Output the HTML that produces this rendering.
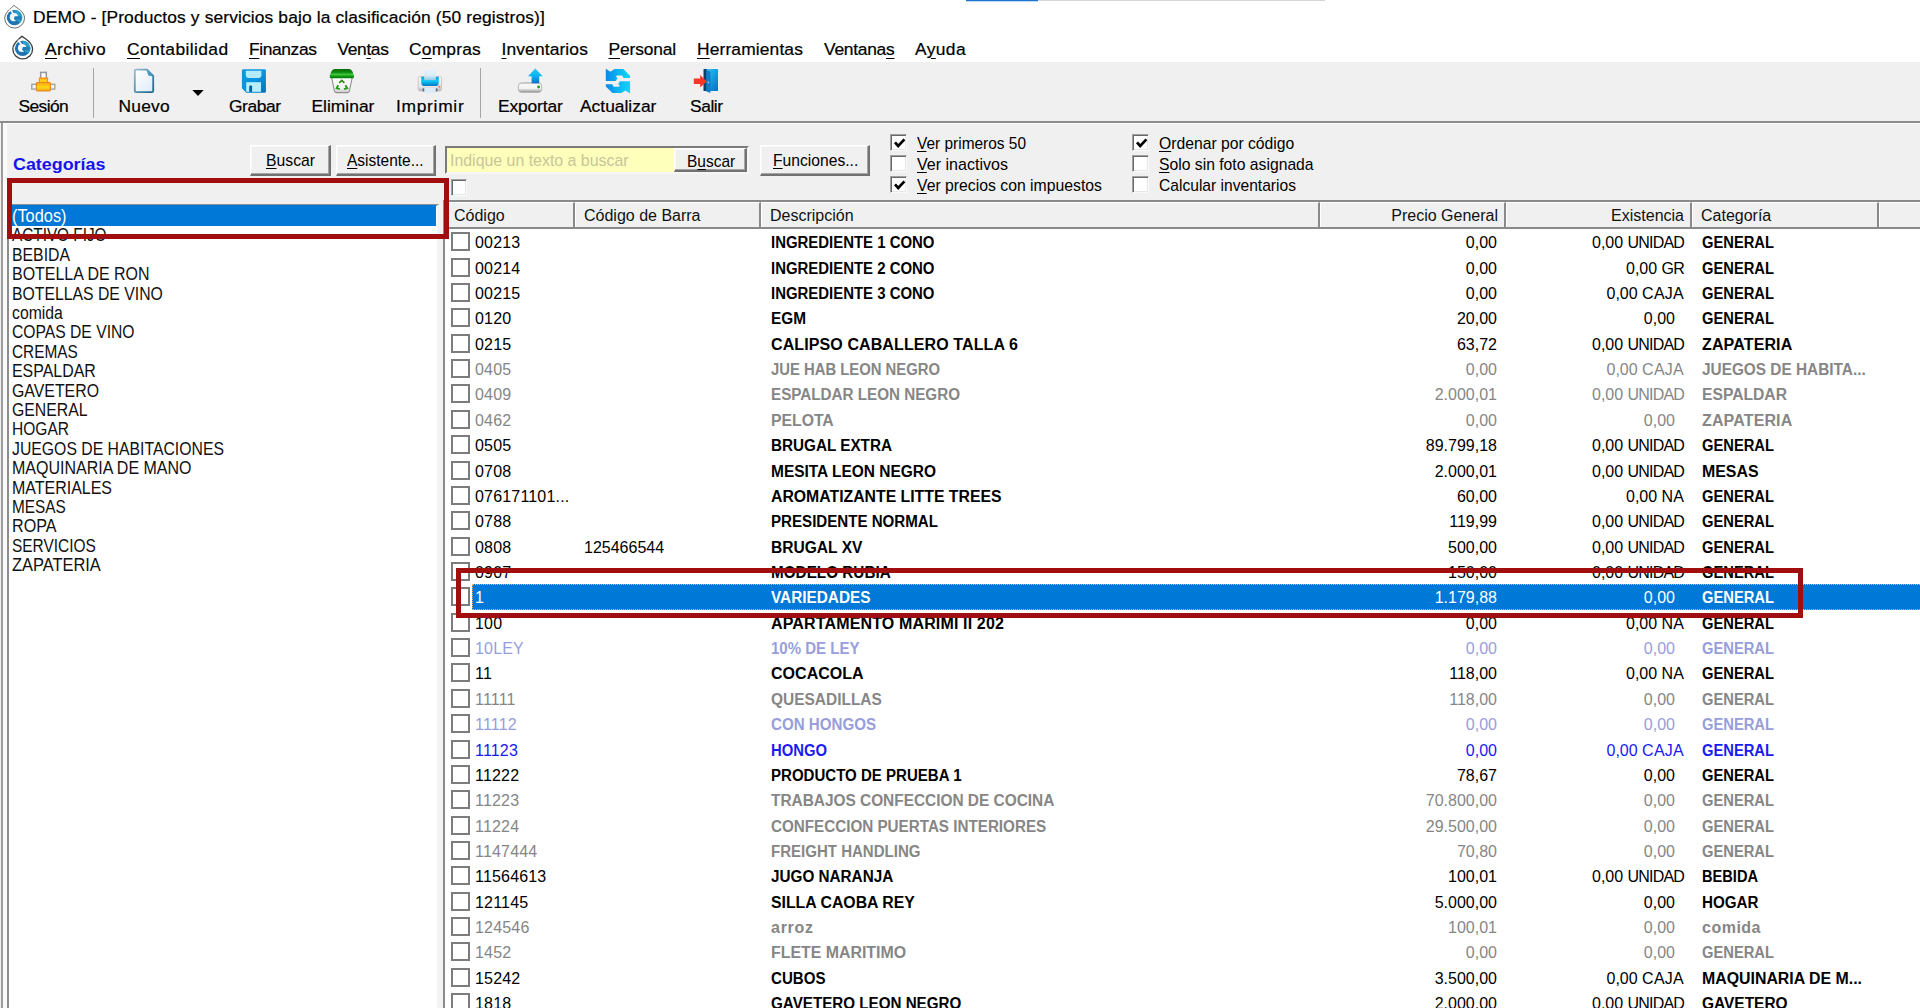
<!DOCTYPE html>
<html lang="es">
<head>
<meta charset="utf-8">
<title>DEMO - Productos y servicios</title>
<style>
html,body{margin:0;padding:0;}
body{width:1920px;height:1008px;overflow:hidden;background:#fff;position:relative;font-family:"Liberation Sans",sans-serif;color:#000;}
div,span,b,i,u{box-sizing:border-box;}
.abs{position:absolute;}
u{text-decoration:underline;text-underline-offset:2px;text-decoration-thickness:1px;}
.ttl{position:absolute;left:33px;top:5.4px;-webkit-text-stroke:0.22px #000;font-size:17.4px;line-height:24px;white-space:nowrap;color:#000;}
.mi{position:absolute;top:36.8px;-webkit-text-stroke:0.22px #000;font-size:17.4px;line-height:24px;white-space:nowrap;color:#000;}
.mi u{text-underline-offset:3px;}
#tb{position:absolute;left:0;top:62px;width:1920px;height:60px;background:#f0f0f0;}
.tl{position:absolute;top:93.7px;-webkit-text-stroke:0.22px #000;font-size:17.4px;line-height:24px;white-space:nowrap;color:#000;}
.sep{position:absolute;top:68px;width:1px;height:50px;background:#a6a6a6;}
#panel{position:absolute;left:0;top:122px;width:1920px;height:886px;background:#f0f0f0;}
.btn{position:absolute;height:31px;background:#f0f0f0;border:solid;border-width:1px 2px 2px 1px;border-color:#fff #727272 #727272 #fff;box-shadow:inset -1px -1px 0 #a6a6a6, inset 1px 1px 0 #f8f8f8;}
.bt{position:absolute;font-size:17px;line-height:22px;white-space:nowrap;transform-origin:0 50%;}
.lbl{position:absolute;font-size:17px;line-height:20px;white-space:nowrap;transform-origin:0 50%;}
.chk{position:absolute;width:17px;height:17px;background:#fff;border:1px solid;border-color:#a0a0a0 #fafafa #fafafa #a0a0a0;box-shadow:inset 1px 1px 0 #696969, inset -1px -1px 0 #e6e6e6;}
.chk svg{position:absolute;left:3px;top:3px;overflow:visible;}
#list{position:absolute;left:7px;top:204px;width:432px;height:810px;background:#fff;border:2px solid #8e8e8e;border-right-color:#e4e4e4;}
.cibg{position:absolute;left:9px;width:427px;height:20.5px;background:#0078d7;}
.ci{position:absolute;left:12.4px;height:20px;font-size:17.6px;line-height:22.6px;white-space:nowrap;color:#111;transform-origin:0 50%;}
.ci.sel{color:#fff;}
#tbl{position:absolute;left:443px;top:200px;width:1480px;height:810px;background:#fff;border-left:2px solid #8a8a8a;}
#th{position:absolute;left:445px;top:200px;width:1475px;height:29px;background:#f0f0f0;border-top:2px solid #8a8a8a;border-bottom:2px solid #8a8a8a;}
.hc{position:absolute;top:202px;height:25px;border-left:1px solid #fff;border-top:1px solid #fff;border-right:2px solid #8a8a8a;font-size:16px;line-height:26px;white-space:nowrap;padding:0 8px 0 8px;color:#111;}
.hc.r{text-align:right;padding-right:6px;}
.r{position:absolute;left:445px;width:1475px;height:25.4px;font-size:16px;line-height:25.4px;white-space:nowrap;}
.r span,.r b{position:absolute;top:0;}
.r .un{position:static;}
.r b{font-weight:bold;}
.cb{position:absolute;left:6px;top:2px;width:19px;height:19px;border:2px solid #7c7c7c;background:#fff;}
.c1{left:30px;letter-spacing:0.18px;}
.c2{left:139px;}
.c3{left:326px;transform-origin:0 50%;}
.c4{right:423px;}
.c5{right:236px;}
.c5.nu{right:245px;}
.c6{left:1257px;transform-origin:0 50%;}
.selbg{position:absolute;left:27px;top:-1px;width:1450px;height:25.6px;background:#0078d7;outline:1px dotted #e8b070;outline-offset:-1px;}
.red{position:absolute;border:5px solid #a00e0e;}
</style>
</head>
<body>
<!-- top accent strip -->
<div class="abs" style="left:966px;top:0;width:72px;height:1px;background:#1a72d2"></div>
<div class="abs" style="left:966px;top:1px;width:72px;height:1px;background:#c4dcf4"></div>
<div class="abs" style="left:1038px;top:0;width:287px;height:1px;background:#d6d6d6"></div>

<!-- title bar -->
<svg class="abs" style="left:2px;top:3px" width="26" height="28" viewBox="2 3 26 28">
 <g transform="translate(14.5 17.6)">
 <path d="M-0.6 -12.2 C2.4 -9.4 10 -6.4 10 0.6 A9.9 9.9 0 0 1 -9.8 0.6 C-9.8 -5.4 -3.2 -9.4 -0.6 -12.2 Z" fill="#fdfdfd" stroke="#5c5c5c" stroke-width="0.9" stroke-linejoin="round"/>
 <circle cx="0" cy="0" r="7.7" fill="#1d74b0"/>
 <path d="M0 -7.7 A7.7 7.7 0 0 1 5.6 5.3 L2.6 2.8 A4 4 0 0 0 0 -4 Z" fill="#2b9fca"/>
 <circle cx="-0.6" cy="-0.4" r="4.1" fill="#f4f9fc"/>
 <path d="M0.2 -1.4 H6.8 V1.8 H2.4 V4.2 L-0.6 1.4 Z" fill="#1f7cb6"/>
 <path d="M-4.4 -8.6 L-1 -3.4" stroke="#f4f9fc" stroke-width="1.7"/>
 </g>
</svg>
<div class="ttl" style="letter-spacing:0.126px">DEMO - [Productos y servicios bajo la clasificación (50 registros)]</div>

<!-- menu bar -->
<svg class="abs" style="left:10px;top:34px" width="26" height="28" viewBox="10 34 26 28">
 <g transform="translate(22.6 48.4)">
 <path d="M-0.6 -12.2 C2.4 -9.4 10 -6.4 10 0.6 A9.9 9.9 0 0 1 -9.8 0.6 C-9.8 -5.4 -3.2 -9.4 -0.6 -12.2 Z" fill="#fdfdfd" stroke="#3e3e3e" stroke-width="1.3" stroke-linejoin="round"/>
 <circle cx="0" cy="0" r="7.7" fill="#1d74b0"/>
 <path d="M0 -7.7 A7.7 7.7 0 0 1 5.6 5.3 L2.6 2.8 A4 4 0 0 0 0 -4 Z" fill="#2b9fca"/>
 <circle cx="-0.6" cy="-0.4" r="4.1" fill="#f4f9fc"/>
 <path d="M0.2 -1.4 H6.8 V1.8 H2.4 V4.2 L-0.6 1.4 Z" fill="#1f7cb6"/>
 <path d="M-4.4 -8.6 L-1 -3.4" stroke="#f4f9fc" stroke-width="1.7"/>
 </g>
</svg>
<div class="mi" style="left:45px;letter-spacing:0.429px"><u>A</u>rchivo</div>
<div class="mi" style="left:127px;letter-spacing:0.400px"><u>C</u>ontabilidad</div>
<div class="mi" style="left:249px;letter-spacing:-0.385px"><u>F</u>inanzas</div>
<div class="mi" style="left:337.5px;letter-spacing:-0.367px">Ven<u>t</u>as</div>
<div class="mi" style="left:409px;letter-spacing:0.205px">C<u>o</u>mpras</div>
<div class="mi" style="left:501.5px;letter-spacing:0.128px"><u>I</u>nventarios</div>
<div class="mi" style="left:608.5px;letter-spacing:-0.145px"><u>P</u>ersonal</div>
<div class="mi" style="left:697px;letter-spacing:0.134px"><u>H</u>erramientas</div>
<div class="mi" style="left:824px;letter-spacing:-0.256px">Ventana<u>s</u></div>
<div class="mi" style="left:915px;letter-spacing:0.397px">A<u>y</u>uda</div>

<!-- toolbar -->
<div id="tb"></div>
<div class="sep" style="left:93px"></div>
<div class="sep" style="left:480px"></div>
<!--ICONS_START-->
<svg class="abs" style="left:0;top:62px" width="760" height="60" viewBox="0 62 760 60">
<defs>
 <linearGradient id="gOr" x1="0" y1="0" x2="0" y2="1"><stop offset="0" stop-color="#ffa31a"/><stop offset="0.55" stop-color="#ffd614"/><stop offset="1" stop-color="#ffab1c"/></linearGradient>
 <linearGradient id="gPg" x1="0" y1="0" x2="1" y2="1"><stop offset="0" stop-color="#ffffff"/><stop offset="0.5" stop-color="#eef5fb"/><stop offset="1" stop-color="#dcecf8"/></linearGradient>
 <linearGradient id="gPgS" x1="0" y1="0" x2="1" y2="1"><stop offset="0" stop-color="#9dbdd0"/><stop offset="0.5" stop-color="#4d8fb0"/><stop offset="1" stop-color="#1d6685"/></linearGradient>
 <linearGradient id="gFl" x1="0" y1="0" x2="1" y2="1"><stop offset="0" stop-color="#1098dc"/><stop offset="0.5" stop-color="#0a94e0"/><stop offset="1" stop-color="#0670b8"/></linearGradient>
 <linearGradient id="gLid" x1="0" y1="0" x2="0" y2="1"><stop offset="0" stop-color="#066a06"/><stop offset="0.35" stop-color="#0c8a0c"/><stop offset="0.6" stop-color="#3ec63e"/><stop offset="0.8" stop-color="#0e960e"/><stop offset="1" stop-color="#087808"/></linearGradient>
 <linearGradient id="gBin" x1="0" y1="0" x2="0" y2="1"><stop offset="0" stop-color="#ffffff"/><stop offset="0.7" stop-color="#f4f4f4"/><stop offset="1" stop-color="#c8c8c8"/></linearGradient>
 <linearGradient id="gPr" x1="0" y1="0" x2="0" y2="1"><stop offset="0" stop-color="#0aa0dc"/><stop offset="0.45" stop-color="#0ccaf8"/><stop offset="1" stop-color="#0474c0"/></linearGradient>
 <linearGradient id="gPap" x1="0" y1="0" x2="0" y2="1"><stop offset="0" stop-color="#eef0fa"/><stop offset="0.6" stop-color="#d8ecf6"/><stop offset="1" stop-color="#8cc8e4"/></linearGradient>
 <linearGradient id="gBody" x1="0" y1="0" x2="0" y2="1"><stop offset="0" stop-color="#f2f8fc"/><stop offset="0.7" stop-color="#e4e8ec"/><stop offset="1" stop-color="#b4b4bc"/></linearGradient>
 <linearGradient id="gAr" x1="0" y1="0" x2="0" y2="1"><stop offset="0" stop-color="#22ccf8"/><stop offset="0.5" stop-color="#0cb4f0"/><stop offset="1" stop-color="#0870cc"/></linearGradient>
 <linearGradient id="gDrv" x1="0" y1="0" x2="0" y2="1"><stop offset="0" stop-color="#c4c4c4"/><stop offset="0.2" stop-color="#fbfbfb"/><stop offset="0.6" stop-color="#f0f0f0"/><stop offset="1" stop-color="#8e8e92"/></linearGradient>
 <linearGradient id="gRf" x1="0" y1="0" x2="1" y2="0"><stop offset="0" stop-color="#0a88e6"/><stop offset="0.55" stop-color="#0cb8f4"/><stop offset="1" stop-color="#14d4f8"/></linearGradient>
 <linearGradient id="gDoor" x1="0" y1="0" x2="1" y2="1"><stop offset="0" stop-color="#48c8f4"/><stop offset="0.5" stop-color="#10a0e4"/><stop offset="1" stop-color="#0870c4"/></linearGradient>
</defs>
<!-- Sesion -->
<rect x="40.7" y="72.4" width="5.6" height="6.4" fill="#fff" stroke="#9696a2" stroke-width="1.5"/>
<rect x="31.8" y="84.3" width="5" height="4.8" fill="#f4f4f4" stroke="#9aa09c" stroke-width="1.3"/>
<rect x="49.8" y="84.3" width="5" height="4.8" fill="#f4f4f4" stroke="#9aa09c" stroke-width="1.3"/>
<rect x="39.4" y="78" width="8.2" height="5" fill="url(#gOr)" stroke="#ee8f28" stroke-width="1.1"/>
<rect x="36.4" y="82.5" width="14" height="8.4" rx="0.8" fill="url(#gOr)" stroke="#e88a22" stroke-width="1.2"/>
<!-- Nuevo -->
<path d="M135.8 69.6 H147 L153.2 75.8 V90.8 a1.4 1.4 0 0 1 -1.4 1.4 H136.2 a1.4 1.4 0 0 1 -1.4 -1.4 V70.6 a1 1 0 0 1 1 -1 Z" fill="url(#gPg)" stroke="url(#gPgS)" stroke-width="1.8" stroke-linejoin="round"/>
<path d="M146.4 70 L152.8 76.4 L148.4 75.4 Z" fill="#3c96c0"/>
<!-- dropdown arrow -->
<path d="M192.3 90 H203.7 L198 96 Z" fill="#000"/>
<!-- Grabar -->
<path d="M243.3 69.2 H264.5 a1.4 1.4 0 0 1 1.4 1.4 V91.4 a1.4 1.4 0 0 1 -1.4 1.4 H246.2 L241.9 88.3 V70.6 a1.4 1.4 0 0 1 1.4 -1.4 Z" fill="url(#gFl)"/>
<path d="M245.8 70.8 H261.4 V75 a3 3 0 0 1 -3 3 H248.8 a3 3 0 0 1 -3 -3 Z" fill="#b2ecfc"/>
<rect x="246.2" y="82.2" width="14.8" height="9.6" fill="#b6effc"/>
<rect x="249.2" y="85.6" width="2.9" height="6.4" rx="1" fill="#0560a8"/>
<!-- Eliminar -->
<path d="M331.6 77 L334.4 91 a2 2 0 0 0 2 1.6 H347.4 a2 2 0 0 0 2 -1.6 L352.3 77 Z" fill="url(#gBin)" stroke="#8e8e92" stroke-width="1.1"/>
<path d="M335.2 69 H348.6 Q351.2 69 352.4 71.4 L353.9 75.2 V77.2 a1 1 0 0 1 -1 1 H330.8 a1 1 0 0 1 -1 -1 V75.2 L331.4 71.4 Q332.6 69 335.2 69 Z" fill="url(#gLid)"/>
<path d="M339.2 82.8 L341.8 80.4 L344.4 82.8" fill="none" stroke="#2e8a14" stroke-width="1.7"/>
<path d="M338.2 85.2 L336.6 88.2 L339.8 89.2" fill="none" stroke="#2a9a1c" stroke-width="1.9"/>
<path d="M345.4 85.2 L347.2 88.2 L344 89.2" fill="none" stroke="#2a9a1c" stroke-width="1.9"/>
<!-- Imprimir -->
<rect x="418.2" y="76.4" width="23.4" height="14.6" rx="2" fill="url(#gBody)" stroke="#c4bcb8" stroke-width="0.8"/>
<path d="M421.2 76.8 H438.8 V82.4 a3.6 3.6 0 0 1 -3.6 3.6 H424.8 a3.6 3.6 0 0 1 -3.6 -3.6 Z" fill="url(#gPr)"/>
<rect x="424.2" y="68.8" width="11.6" height="11.4" fill="url(#gPap)"/>
<rect x="424.2" y="88" width="11.6" height="5" fill="#dcecf6"/>
<rect x="422.6" y="88.4" width="1.6" height="3" fill="#5a6a78"/>
<rect x="435.8" y="88.4" width="1.6" height="3" fill="#5a6a78"/>
<circle cx="439.4" cy="86.6" r="1.2" fill="#e88a50"/>
<!-- Exportar -->
<rect x="518.4" y="82.8" width="23.2" height="9.6" rx="3.2" fill="url(#gDrv)" stroke="#b2b2b2" stroke-width="0.9"/>
<circle cx="538.6" cy="87" r="1.4" fill="#1e9a1e"/>
<path d="M535.3 68.6 L542.6 76.2 H539.2 V83.2 H531.6 V76.2 H528 Z" fill="url(#gAr)"/>
<!-- Actualizar -->
<path d="M605.8 68.8 L610.4 71.8 L614.5 69.1 H623.4 L630 75.7 V78 H623.6 L622.1 75.4 H617 L615.8 76.7 L617.7 78 L615.8 80.9 H605.8 Z" fill="url(#gRf)"/>
<path d="M630.1 93.4 L625.4 90.4 L621.4 93.1 H612.4 L605.8 86.5 V84.2 H612.2 L613.7 86.8 H618.8 L620 85.5 L618.1 84.2 L620 81.3 H630.1 Z" fill="url(#gRf)"/>
<!-- Salir -->
<rect x="703.6" y="69" width="14.4" height="22" rx="0.8" fill="url(#gDoor)"/>
<path d="M703.6 69 H706.6 L706.4 91 H703.6 Z" fill="#063e6c"/>
<path d="M706.2 70.2 L710.4 71.4 V93 L706.4 91.4 Z" fill="#0f7cc4"/>
<path d="M693.8 78.4 H700.2 V75 L706.8 81.6 L700.2 87.6 V84 H693.8 Z" fill="#f03a26"/>
<circle cx="708.4" cy="82.4" r="0.8" fill="#9adcff"/>
</svg>
<!--ICONS_END-->
<div class="tl" style="left:18.4px;letter-spacing:-0.565px">Sesión</div>
<div class="tl" style="left:118.4px;letter-spacing:0.264px">Nuevo</div>
<div class="tl" style="left:229px;letter-spacing:-0.421px">Grabar</div>
<div class="tl" style="left:311.4px;letter-spacing:0.023px">Eliminar</div>
<div class="tl" style="left:396px;letter-spacing:0.700px">Imprimir</div>
<div class="tl" style="left:498px;letter-spacing:-0.142px">Exportar</div>
<div class="tl" style="left:580px;">Actualizar</div>
<div class="tl" style="left:690px;letter-spacing:-0.439px">Salir</div>

<!-- main panel -->
<div id="panel"></div>
<div class="abs" style="left:0;top:121px;width:1920px;height:2px;background:#8c8c8c"></div>
<div class="abs" style="left:1px;top:123px;width:2px;height:885px;background:#9c9c9c"></div>
<div class="abs" style="left:3px;top:123px;width:1917px;height:1px;background:#fbfbfb"></div>
<div class="abs" style="left:3px;top:124px;width:4px;height:884px;background:#fafafa"></div>

<div class="lbl" style="left:12.6px;top:155.4px;font-weight:bold;color:#1414ec;font-size:17px;transform:scaleX(1.0515)">Categorías</div>
<div class="btn" style="left:250px;top:145px;width:81px"></div>
<div class="bt" style="left:266.4px;top:150px;transform:scaleX(0.9259)"><u>B</u>uscar</div>
<div class="btn" style="left:336px;top:145px;width:100px"></div>
<div class="bt" style="left:346.6px;top:150px;transform:scaleX(0.9107)"><u>A</u>sistente...</div>

<!-- search box -->
<div class="abs" style="left:445px;top:146px;width:304px;height:28px;border:2px solid;border-color:#7a7a7a #f6f6f6 #f6f6f6 #7a7a7a;background:#ffffbc"></div>
<div class="bt" style="left:449.8px;top:150px;color:#c6c69a;transform:scaleX(0.9355)">Indique un texto a buscar</div>
<div class="btn" style="left:674px;top:148px;width:73px;height:24px"></div>
<div class="bt" style="left:686.6px;top:150.6px;transform:scaleX(0.9105)">B<u>u</u>scar</div>
<div class="btn" style="left:760px;top:145px;width:110px"></div>
<div class="bt" style="left:772.6px;top:150px;transform:scaleX(0.9209)"><u>F</u>unciones...</div>

<!-- select-all checkbox -->
<div class="chk" style="left:451px;top:178.5px;width:16px;height:17px"></div>

<!-- option checkboxes -->
<div class="chk" style="left:890px;top:134px"><svg width="11" height="11" viewBox="0 0 11 11"><path d="M1 4.4 L4.2 8 L10.4 1.4" fill="none" stroke="#000" stroke-width="2.7"/></svg></div>
<div class="chk" style="left:890px;top:155px"></div>
<div class="chk" style="left:890px;top:176px"><svg width="11" height="11" viewBox="0 0 11 11"><path d="M1 4.4 L4.2 8 L10.4 1.4" fill="none" stroke="#000" stroke-width="2.7"/></svg></div>
<div class="chk" style="left:1132px;top:134px"><svg width="11" height="11" viewBox="0 0 11 11"><path d="M1 4.4 L4.2 8 L10.4 1.4" fill="none" stroke="#000" stroke-width="2.7"/></svg></div>
<div class="chk" style="left:1132px;top:155px"></div>
<div class="chk" style="left:1132px;top:176px"></div>

<div class="lbl" style="left:916.8px;top:134.2px;transform:scaleX(0.9082)"><u>V</u>er primeros 50</div>
<div class="lbl" style="left:916.8px;top:155.2px;transform:scaleX(0.9441)"><u>V</u>er inactivos</div>
<div class="lbl" style="left:916.8px;top:176.2px;transform:scaleX(0.9278)"><u>V</u>er precios con impuestos</div>
<div class="lbl" style="left:1159.2px;top:134.2px;transform:scaleX(0.9235)"><u>O</u>rdenar por código</div>
<div class="lbl" style="left:1159.2px;top:155.2px;transform:scaleX(0.9241)"><u>S</u>olo sin foto asignada</div>
<div class="lbl" style="left:1159.2px;top:176.2px;transform:scaleX(0.9176)">Calcular inventarios</div>

<!-- category list -->
<div id="list"></div>
<div class="abs" style="left:437px;top:205px;width:6px;height:803px;background:#f3f3f3"></div>
<div class="cibg" style="top:205.0px"></div>
<div class="ci sel" style="top:205.0px;transform:scaleX(0.9289)">(Todos)</div>
<div class="ci" style="top:224.4px;transform:scaleX(0.8708)">ACTIVO FIJO</div>
<div class="ci" style="top:243.8px;transform:scaleX(0.8986)">BEBIDA</div>
<div class="ci" style="top:263.2px;transform:scaleX(0.9072)">BOTELLA DE RON</div>
<div class="ci" style="top:282.6px;transform:scaleX(0.8967)">BOTELLAS DE VINO</div>
<div class="ci" style="top:302.0px;transform:scaleX(0.8956)">comida</div>
<div class="ci" style="top:321.4px;transform:scaleX(0.8907)">COPAS DE VINO</div>
<div class="ci" style="top:340.8px;transform:scaleX(0.8741)">CREMAS</div>
<div class="ci" style="top:360.2px;transform:scaleX(0.9052)">ESPALDAR</div>
<div class="ci" style="top:379.6px;transform:scaleX(0.9018)">GAVETERO</div>
<div class="ci" style="top:399.0px;transform:scaleX(0.8978)">GENERAL</div>
<div class="ci" style="top:418.4px;transform:scaleX(0.8833)">HOGAR</div>
<div class="ci" style="top:437.8px;transform:scaleX(0.8973)">JUEGOS DE HABITACIONES</div>
<div class="ci" style="top:457.2px;transform:scaleX(0.9090)">MAQUINARIA DE MANO</div>
<div class="ci" style="top:476.6px;transform:scaleX(0.9078)">MATERIALES</div>
<div class="ci" style="top:496.0px;transform:scaleX(0.8732)">MESAS</div>
<div class="ci" style="top:515.4px;transform:scaleX(0.9163)">ROPA</div>
<div class="ci" style="top:534.8px;transform:scaleX(0.8775)">SERVICIOS</div>
<div class="ci" style="top:554.2px;transform:scaleX(0.9332)">ZAPATERIA</div>

<!-- table -->
<div id="tbl"></div>
<div id="th"></div>
<div class="hc" style="left:445px;width:130px">Código</div>
<div class="hc" style="left:575px;width:186px">Código de Barra</div>
<div class="hc" style="left:761px;width:559px">Descripción</div>
<div class="hc r" style="left:1320px;width:186px">Precio General</div>
<div class="hc r" style="left:1506px;width:186px">Existencia</div>
<div class="hc" style="left:1692px;width:187px">Categoría</div>
<div class="hc" style="left:1879px;width:60px"></div>
<div class="r" style="top:230.30px;color:#000"><i class="cb"></i><span class="c1">00213</span><b class="c3" style="transform:scaleX(0.9335)">INGREDIENTE 1 CONO</b><span class="c4">0,00</span><span class="c5">0,00 <span class="un" style="letter-spacing:-0.824px">UNIDAD</span></span><b class="c6" style="transform:scaleX(0.9203)">GENERAL</b></div>
<div class="r" style="top:255.66px;color:#000"><i class="cb"></i><span class="c1">00214</span><b class="c3" style="transform:scaleX(0.9335)">INGREDIENTE 2 CONO</b><span class="c4">0,00</span><span class="c5">0,00 <span class="un" style="letter-spacing:-0.800px">GR</span></span><b class="c6" style="transform:scaleX(0.9203)">GENERAL</b></div>
<div class="r" style="top:281.02px;color:#000"><i class="cb"></i><span class="c1">00215</span><b class="c3" style="transform:scaleX(0.9335)">INGREDIENTE 3 CONO</b><span class="c4">0,00</span><span class="c5">0,00 <span class="un" style="letter-spacing:0.248px">CAJA</span></span><b class="c6" style="transform:scaleX(0.9203)">GENERAL</b></div>
<div class="r" style="top:306.38px;color:#000"><i class="cb"></i><span class="c1">0120</span><b class="c3" style="transform:scaleX(0.9601)">EGM</b><span class="c4">20,00</span><span class="c5 nu">0,00</span><b class="c6" style="transform:scaleX(0.9203)">GENERAL</b></div>
<div class="r" style="top:331.74px;color:#000"><i class="cb"></i><span class="c1">0215</span><b class="c3" style="letter-spacing:0.102px">CALIPSO CABALLERO TALLA 6</b><span class="c4">63,72</span><span class="c5">0,00 <span class="un" style="letter-spacing:-0.824px">UNIDAD</span></span><b class="c6" style="letter-spacing:0.135px">ZAPATERIA</b></div>
<div class="r" style="top:357.10px;color:#868686"><i class="cb"></i><span class="c1">0405</span><b class="c3" style="transform:scaleX(0.9273)">JUE HAB LEON NEGRO</b><span class="c4">0,00</span><span class="c5">0,00 <span class="un" style="letter-spacing:0.248px">CAJA</span></span><b class="c6" style="transform:scaleX(0.9607)">JUEGOS DE HABITA...</b></div>
<div class="r" style="top:382.46px;color:#868686"><i class="cb"></i><span class="c1">0409</span><b class="c3" style="transform:scaleX(0.9506)">ESPALDAR LEON NEGRO</b><span class="c4">2.000,01</span><span class="c5">0,00 <span class="un" style="letter-spacing:-0.824px">UNIDAD</span></span><b class="c6" style="transform:scaleX(0.9789)">ESPALDAR</b></div>
<div class="r" style="top:407.82px;color:#868686"><i class="cb"></i><span class="c1">0462</span><b class="c3" style="transform:scaleX(0.9843)">PELOTA</b><span class="c4">0,00</span><span class="c5 nu">0,00</span><b class="c6" style="letter-spacing:0.135px">ZAPATERIA</b></div>
<div class="r" style="top:433.18px;color:#000"><i class="cb"></i><span class="c1">0505</span><b class="c3" style="transform:scaleX(0.9540)">BRUGAL EXTRA</b><span class="c4">89.799,18</span><span class="c5">0,00 <span class="un" style="letter-spacing:-0.824px">UNIDAD</span></span><b class="c6" style="transform:scaleX(0.9203)">GENERAL</b></div>
<div class="r" style="top:458.54px;color:#000"><i class="cb"></i><span class="c1">0708</span><b class="c3" style="transform:scaleX(0.9668)">MESITA LEON NEGRO</b><span class="c4">2.000,01</span><span class="c5">0,00 <span class="un" style="letter-spacing:-0.824px">UNIDAD</span></span><b class="c6" style="transform:scaleX(0.9929)">MESAS</b></div>
<div class="r" style="top:483.90px;color:#000"><i class="cb"></i><span class="c1">076171101...</span><b class="c3" style="transform:scaleX(0.9873)">AROMATIZANTE LITTE TREES</b><span class="c4">60,00</span><span class="c5">0,00 <span class="un" style="letter-spacing:0.083px">NA</span></span><b class="c6" style="transform:scaleX(0.9203)">GENERAL</b></div>
<div class="r" style="top:509.26px;color:#000"><i class="cb"></i><span class="c1">0788</span><b class="c3" style="transform:scaleX(0.9440)">PRESIDENTE NORMAL</b><span class="c4">119,99</span><span class="c5">0,00 <span class="un" style="letter-spacing:-0.824px">UNIDAD</span></span><b class="c6" style="transform:scaleX(0.9203)">GENERAL</b></div>
<div class="r" style="top:534.62px;color:#000"><i class="cb"></i><span class="c1">0808</span><span class="c2">125466544</span><b class="c3" style="transform:scaleX(0.9730)">BRUGAL XV</b><span class="c4">500,00</span><span class="c5">0,00 <span class="un" style="letter-spacing:-0.824px">UNIDAD</span></span><b class="c6" style="transform:scaleX(0.9203)">GENERAL</b></div>
<div class="r" style="top:559.98px;color:#000"><i class="cb"></i><span class="c1">0907</span><b class="c3" style="transform:scaleX(0.9551)">MODELO RUBIA</b><span class="c4">150,00</span><span class="c5">0,00 <span class="un" style="letter-spacing:-0.824px">UNIDAD</span></span><b class="c6" style="transform:scaleX(0.9203)">GENERAL</b></div>
<div class="r" style="top:585.34px;color:#fff"><div class="selbg"></div><i class="cb"></i><span class="c1">1</span><b class="c3" style="transform:scaleX(0.9593)">VARIEDADES</b><span class="c4">1.179,88</span><span class="c5 nu">0,00</span><b class="c6" style="transform:scaleX(0.9203)">GENERAL</b></div>
<div class="r" style="top:610.70px;color:#000"><i class="cb"></i><span class="c1">100</span><b class="c3" style="letter-spacing:0.146px">APARTAMENTO MARIMI II 202</b><span class="c4">0,00</span><span class="c5">0,00 <span class="un" style="letter-spacing:0.083px">NA</span></span><b class="c6" style="transform:scaleX(0.9203)">GENERAL</b></div>
<div class="r" style="top:636.06px;color:#989ddb"><i class="cb"></i><span class="c1">10LEY</span><b class="c3" style="transform:scaleX(0.9388)">10% DE LEY</b><span class="c4">0,00</span><span class="c5 nu">0,00</span><b class="c6" style="transform:scaleX(0.9203)">GENERAL</b></div>
<div class="r" style="top:661.42px;color:#000"><i class="cb"></i><span class="c1">11</span><b class="c3" style="letter-spacing:0.033px">COCACOLA</b><span class="c4">118,00</span><span class="c5">0,00 <span class="un" style="letter-spacing:0.083px">NA</span></span><b class="c6" style="transform:scaleX(0.9203)">GENERAL</b></div>
<div class="r" style="top:686.78px;color:#868686"><i class="cb"></i><span class="c1">11111</span><b class="c3" style="transform:scaleX(0.9662)">QUESADILLAS</b><span class="c4">118,00</span><span class="c5 nu">0,00</span><b class="c6" style="transform:scaleX(0.9203)">GENERAL</b></div>
<div class="r" style="top:712.14px;color:#989ddb"><i class="cb"></i><span class="c1">11112</span><b class="c3" style="transform:scaleX(0.9449)">CON HONGOS</b><span class="c4">0,00</span><span class="c5 nu">0,00</span><b class="c6" style="transform:scaleX(0.9203)">GENERAL</b></div>
<div class="r" style="top:737.50px;color:#1a1af2"><i class="cb"></i><span class="c1">11123</span><b class="c3" style="transform:scaleX(0.9263)">HONGO</b><span class="c4">0,00</span><span class="c5">0,00 <span class="un" style="letter-spacing:0.248px">CAJA</span></span><b class="c6" style="transform:scaleX(0.9203)">GENERAL</b></div>
<div class="r" style="top:762.86px;color:#000"><i class="cb"></i><span class="c1">11222</span><b class="c3" style="transform:scaleX(0.9398)">PRODUCTO DE PRUEBA 1</b><span class="c4">78,67</span><span class="c5 nu">0,00</span><b class="c6" style="transform:scaleX(0.9203)">GENERAL</b></div>
<div class="r" style="top:788.22px;color:#868686"><i class="cb"></i><span class="c1">11223</span><b class="c3" style="transform:scaleX(0.9628)">TRABAJOS CONFECCION DE COCINA</b><span class="c4">70.800,00</span><span class="c5 nu">0,00</span><b class="c6" style="transform:scaleX(0.9203)">GENERAL</b></div>
<div class="r" style="top:813.58px;color:#868686"><i class="cb"></i><span class="c1">11224</span><b class="c3" style="transform:scaleX(0.9506)">CONFECCION PUERTAS INTERIORES</b><span class="c4">29.500,00</span><span class="c5 nu">0,00</span><b class="c6" style="transform:scaleX(0.9203)">GENERAL</b></div>
<div class="r" style="top:838.94px;color:#868686"><i class="cb"></i><span class="c1">1147444</span><b class="c3" style="transform:scaleX(0.9396)">FREIGHT HANDLING</b><span class="c4">70,80</span><span class="c5 nu">0,00</span><b class="c6" style="transform:scaleX(0.9203)">GENERAL</b></div>
<div class="r" style="top:864.30px;color:#000"><i class="cb"></i><span class="c1">11564613</span><b class="c3" style="transform:scaleX(0.9546)">JUGO NARANJA</b><span class="c4">100,01</span><span class="c5">0,00 <span class="un" style="letter-spacing:-0.824px">UNIDAD</span></span><b class="c6" style="transform:scaleX(0.9129)">BEBIDA</b></div>
<div class="r" style="top:889.66px;color:#000"><i class="cb"></i><span class="c1">121145</span><b class="c3" style="transform:scaleX(0.9884)">SILLA CAOBA REY</b><span class="c4">5.000,00</span><span class="c5 nu">0,00</span><b class="c6" style="transform:scaleX(0.9486)">HOGAR</b></div>
<div class="r" style="top:915.02px;color:#868686"><i class="cb"></i><span class="c1">124546</span><b class="c3" style="letter-spacing:0.735px">arroz</b><span class="c4">100,01</span><span class="c5 nu">0,00</span><b class="c6" style="letter-spacing:0.497px">comida</b></div>
<div class="r" style="top:940.38px;color:#868686"><i class="cb"></i><span class="c1">1452</span><b class="c3" style="transform:scaleX(0.9928)">FLETE MARITIMO</b><span class="c4">0,00</span><span class="c5 nu">0,00</span><b class="c6" style="transform:scaleX(0.9203)">GENERAL</b></div>
<div class="r" style="top:965.74px;color:#000"><i class="cb"></i><span class="c1">15242</span><b class="c3" style="transform:scaleX(0.9432)">CUBOS</b><span class="c4">3.500,00</span><span class="c5">0,00 <span class="un" style="letter-spacing:0.248px">CAJA</span></span><b class="c6" style="transform:scaleX(0.9926)">MAQUINARIA DE M...</b></div>
<div class="r" style="top:991.10px;color:#000"><i class="cb"></i><span class="c1">1818</span><b class="c3" style="transform:scaleX(0.9486)">GAVETERO LEON NEGRO</b><span class="c4">2.000,00</span><span class="c5">0,00 <span class="un" style="letter-spacing:-0.824px">UNIDAD</span></span><b class="c6" style="transform:scaleX(0.9660)">GAVETERO</b></div>

<!-- annotation rectangles -->
<div class="red" style="left:7px;top:178.2px;width:442px;height:61.2px"></div>
<div class="red" style="left:456px;top:568px;width:1347px;height:49.6px"></div>
</body>
</html>
